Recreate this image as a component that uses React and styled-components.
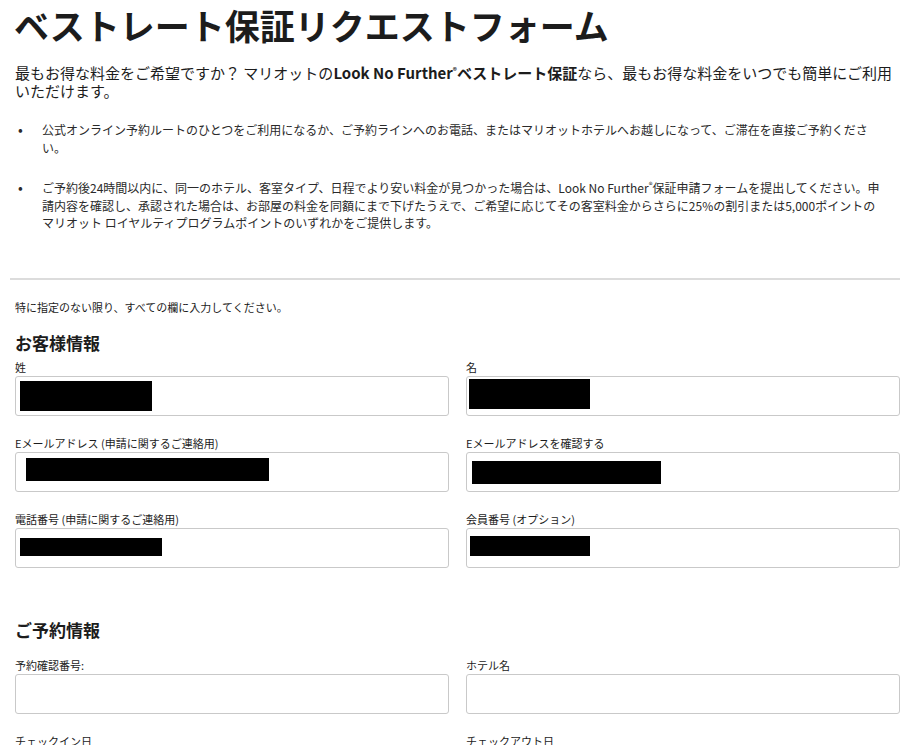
import React from 'react'
import styled, { createGlobalStyle } from 'styled-components'

//!GLOBAL
const GlobalStyle = createGlobalStyle`
  body {
    margin: 0;
    background: #fff;
    color: #1c1c1c;
    font-family: "Noto Sans CJK JP", "Noto Sans", sans-serif;
  }
`

//!STYLE COMPONENTS
const Page = styled.div`
  width: 885px;
  padding-left: 15px;
`
const Title = styled.h1`
  margin: 0 0 14px -1px;
  font-size: 35px;
  line-height: 50px;
  font-weight: 700;
  letter-spacing: 0;
`
const Intro = styled.p`
  margin: 0;
  font-size: 15px;
  line-height: 18px;
`
const Strong = styled.b`
  font-weight: 700;
`
const Reg = styled.sup`
  font-size: 8px;
  vertical-align: 5px;
  line-height: 0;
`
const BulletList = styled.ul`
  list-style: none;
  margin: 21px 0 0;
  padding: 0;
  width: 867px;
`
const Bullet = styled.li`
  display: flex;
  font-size: 12px;
  line-height: 17.5px;
  color: #2a2a2a;
  & + & {
    margin-top: 23px;
  }
`
const Dot = styled.span`
  flex: 0 0 27px;
  padding-left: 3px;
  box-sizing: border-box;
  font-size: 14px;
`
const Divider = styled.hr`
  margin: 46px 0 0 -5px;
  width: 890px;
  border: none;
  border-top: 2px solid #dcdcdc;
`
const Note = styled.p`
  margin: 19px 0 0;
  font-size: 11px;
  line-height: 16px;
`
const SectionTitle = styled.h2`
  margin: ${p => p.$top}px 0 ${p => p.$bottom}px;
  font-size: 17px;
  line-height: 24px;
  font-weight: 700;
`
const Grid = styled.div`
  display: grid;
  grid-template-columns: 434px 434px;
  column-gap: 17px;
  row-gap: 19px;
`
const Field = styled.div`
  display: flex;
  flex-direction: column;
`
const Label = styled.label`
  font-size: 11px;
  line-height: 16px;
  margin-bottom: 1px;
  color: #1c1c1c;
`
const Input = styled.div`
  height: 40px;
  box-sizing: border-box;
  border: 1px solid #c9c9c9;
  border-radius: 3px;
  background: #fff;
`
const Redacted = styled.div`
  width: ${p => p.$w}px;
  height: ${p => p.$h}px;
  margin: ${p => p.$y}px 0 0 ${p => p.$x}px;
  background: #000;
`

const guest = [
  { label: '姓', box: { x: 4, y: 4, w: 132, h: 30 } },
  { label: '名', box: { x: 2, y: 2, w: 121, h: 30 } },
  { label: 'Eメールアドレス (申請に関するご連絡用)', box: { x: 10, y: 5, w: 243, h: 23 } },
  { label: 'Eメールアドレスを確認する', box: { x: 5, y: 8, w: 189, h: 23 } },
  { label: '電話番号 (申請に関するご連絡用)', box: { x: 4, y: 9, w: 142, h: 18 } },
  { label: '会員番号 (オプション)', box: { x: 3, y: 7, w: 120, h: 20 } },
]

const booking = [
  { label: '予約確認番号:' },
  { label: 'ホテル名' },
  { label: 'チェックイン日' },
  { label: 'チェックアウト日' },
]

const FormField = ({ label, box }) => (
  <Field>
    <Label>{label}</Label>
    <Input>
      {box && <Redacted $x={box.x} $y={box.y} $w={box.w} $h={box.h} />}
    </Input>
  </Field>
)

//!My DIV
const App = () => {
  return (
    <>
      <GlobalStyle />
      <Page>
        <Title>ベストレート保証リクエストフォーム</Title>
        <Intro>
          最もお得な料金をご希望ですか？ マリオットの
          <Strong>Look No Further<Reg>®</Reg>ベストレート保証</Strong>
          なら、最もお得な料金をいつでも簡単にご利用いただけます。
        </Intro>

        <BulletList>
          <Bullet>
            <Dot>•</Dot>
            <span>
              公式オンライン予約ルートのひとつをご利用になるか、ご予約ラインへのお電話、またはマリオットホテルへお越しになって、ご滞在を直接ご予約ください。
            </span>
          </Bullet>
          <Bullet>
            <Dot>•</Dot>
            <span>
              ご予約後24時間以内に、同一のホテル、客室タイプ、日程でより安い料金が見つかった場合は、Look No Further<Reg>®</Reg>保証申請フォームを提出してください。申請内容を確認し、承認された場合は、お部屋の料金を同額にまで下げたうえで、ご希望に応じてその客室料金からさらに25%の割引または5,000ポイントのマリオット ロイヤルティプログラムポイントのいずれかをご提供します。
            </span>
          </Bullet>
        </BulletList>

        <Divider />

        <Note>特に指定のない限り、すべての欄に入力してください。</Note>

        <SectionTitle $top={16} $bottom={4}>お客様情報</SectionTitle>
        <Grid>
          {guest.map(f => (
            <FormField key={f.label} label={f.label} box={f.box} />
          ))}
        </Grid>

        <SectionTitle $top={50} $bottom={15}>ご予約情報</SectionTitle>
        <Grid>
          {booking.map(f => (
            <FormField key={f.label} label={f.label} />
          ))}
        </Grid>
      </Page>
    </>
  )
}

export default App
